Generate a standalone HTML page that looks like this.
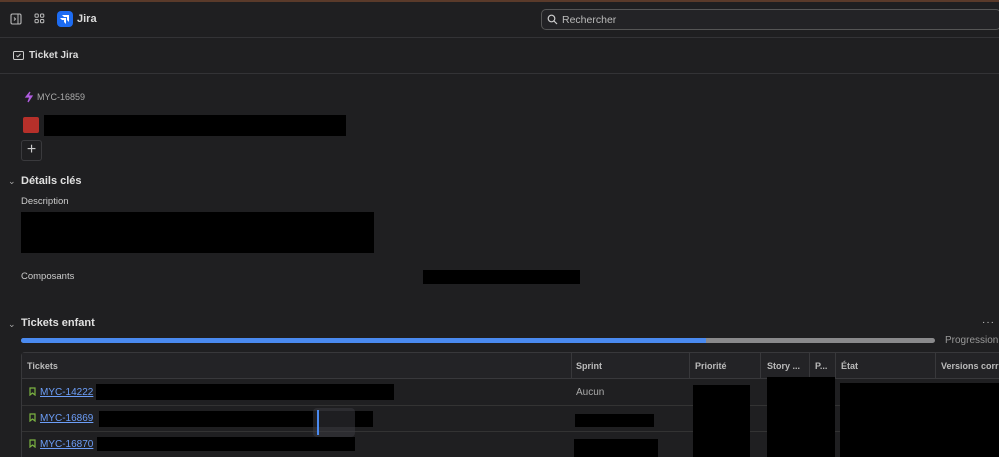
<!DOCTYPE html>
<html><head><meta charset="utf-8"><style>
*{margin:0;padding:0;box-sizing:border-box}
html,body{width:999px;height:457px;overflow:hidden}
body{background:#1f1f21;font-family:"Liberation Sans",sans-serif;color:#d6d6d6;position:relative;font-size:11px}
.a{position:absolute}
.b{position:absolute;background:#000}
.hl{position:absolute;left:0;width:999px;height:1px;background:#333336}
.link{color:#6c9ef8;text-decoration:underline;font-size:10px}
.th{position:absolute;top:361px;font-size:9px;font-weight:bold;color:#bbb}
.vl{position:absolute;top:353px;width:1px;height:104px;background:#38383b}
</style></head><body>
<div class="a" style="left:0;top:0;width:999px;height:2px;background:#5a3a2a"></div>
<svg class="a" style="left:10px;top:13px" width="12" height="12" viewBox="0 0 12 12"><rect x="1" y="1" width="10" height="10" rx="1.5" fill="none" stroke="#bbb" stroke-width="1.1"/><line x1="8" y1="1" x2="8" y2="11" stroke="#bbb"/><path d="M4 4.5l1.5 1.5L4 7.5" stroke="#bbb" fill="none"/></svg>
<svg class="a" style="left:34px;top:13px" width="11" height="11" viewBox="0 0 11 11" fill="none" stroke="#bbb"><rect x="1" y="1" width="3.3" height="3.3" rx="1"/><rect x="6.5" y="1" width="3.3" height="3.3" rx="1"/><rect x="1" y="6.5" width="3.3" height="3.3" rx="1"/><rect x="6.5" y="6.5" width="3.3" height="3.3" rx="1"/></svg>
<div class="a" style="left:57px;top:11px;width:16px;height:16px;border-radius:4px;background:#1d6cf2"><svg width="16" height="16" viewBox="0 0 16 16" fill="#fff"><path d="M5 4h7v7l-2-2V6H7z"/><path d="M3 7h6v6L7 11V9H5z"/></svg></div>
<div class="a" style="left:77px;top:13px;font-size:11px;font-weight:bold;color:#ddd">Jira</div>
<div class="a" style="left:541px;top:9px;width:460px;height:21px;border:1px solid #555;border-radius:5px;background:#232326"></div>
<svg class="a" style="left:547px;top:14px" width="11" height="11" viewBox="0 0 11 11" fill="none" stroke="#ccc" stroke-width="1.2"><circle cx="4.5" cy="4.5" r="3.3"/><path d="M7 7l3 3"/></svg>
<div class="a" style="left:562px;top:14px;font-size:10.5px;color:#bbb">Rechercher</div>
<div class="hl" style="top:37px"></div>
<svg class="a" style="left:13px;top:51px" width="11" height="9" viewBox="0 0 11 9" fill="none" stroke="#ccc"><rect x="0.5" y="0.5" width="10" height="8" rx="1.2"/><path d="M3.5 4.5l1.3 1.3L7.5 3"/></svg>
<div class="a" style="left:29px;top:50px;font-size:10px;font-weight:bold;color:#ddd">Ticket Jira</div>
<div class="hl" style="top:73px"></div>
<svg class="a" style="left:24px;top:91px" width="10" height="12" viewBox="0 0 10 12" fill="none" stroke="#b05ce0" stroke-width="1.2"><path d="M6 1L2 6h4l-2 5 4-6H4z"/></svg>
<div class="a" style="left:37px;top:92px;font-size:9px;color:#aaa">MYC-16859</div>
<div class="a" style="left:23px;top:117px;width:16px;height:16px;border-radius:2px;background:#b6302a"></div>
<div class="b" style="left:44px;top:115px;width:302px;height:21px"></div>
<div class="a" style="left:21px;top:140px;width:21px;height:21px;border:1px solid #3a3a3d;border-radius:3px;color:#ccc;font-size:16px;text-align:center;line-height:18px">+</div>
<div class="a" style="left:8px;top:176px;font-size:9px;color:#aaa">⌄</div>
<div class="a" style="left:21px;top:175px;font-size:11px;font-weight:bold;color:#e0e0e0">Détails clés</div>
<div class="a" style="left:21px;top:196px;font-size:9.5px;color:#ccc">Description</div>
<div class="b" style="left:21px;top:212px;width:353px;height:41px"></div>
<div class="a" style="left:21px;top:271px;font-size:9.5px;color:#ccc">Composants</div>
<div class="b" style="left:423px;top:270px;width:157px;height:14px"></div>
<div class="a" style="left:8px;top:319px;font-size:9px;color:#aaa">⌄</div>
<div class="a" style="left:21px;top:317px;font-size:11px;font-weight:bold;color:#e0e0e0">Tickets enfant</div>
<div class="a" style="left:982px;top:317px;font-size:10px;color:#ccc;letter-spacing:1px">···</div>
<div class="a" style="left:21px;top:338px;width:914px;height:5px;border-radius:3px;background:#8a8a8c"></div>
<div class="a" style="left:21px;top:338px;width:685px;height:5px;border-radius:3px 0 0 3px;background:#4a8af0"></div>
<div class="a" style="left:945px;top:335px;font-size:10px;color:#999">Progression</div>
<div class="a" style="left:21px;top:352px;width:990px;height:110px;border:1px solid #38383b;border-radius:4px"></div>
<div class="a" style="left:22px;top:353px;width:977px;height:25px;background:#232326"></div>
<div class="a" style="left:22px;top:378px;width:977px;height:1px;background:#38383b"></div>
<div class="a" style="left:22px;top:405px;width:977px;height:1px;background:#333"></div>
<div class="a" style="left:22px;top:431px;width:977px;height:1px;background:#333"></div>
<div class="vl" style="left:571px;height:25px"></div><div class="vl" style="left:689px;height:25px"></div><div class="vl" style="left:760px;height:25px"></div><div class="vl" style="left:809px;height:25px"></div><div class="vl" style="left:835px;height:25px"></div><div class="vl" style="left:935px;height:25px"></div>
<div class="th" style="left:27px">Tickets</div><div class="th" style="left:576px">Sprint</div><div class="th" style="left:695px">Priorité</div><div class="th" style="left:767px">Story ...</div><div class="th" style="left:815px">P...</div><div class="th" style="left:841px">État</div><div class="th" style="left:941px;white-space:nowrap">Versions corrigées</div>
<svg class="a" style="left:29px;top:387px" width="7" height="9" viewBox="0 0 7 9" fill="none" stroke="#7cb342" stroke-width="1.2"><path d="M1 1h5v7L3.5 6 1 8z"/></svg>
<svg class="a" style="left:29px;top:413px" width="7" height="9" viewBox="0 0 7 9" fill="none" stroke="#7cb342" stroke-width="1.2"><path d="M1 1h5v7L3.5 6 1 8z"/></svg>
<svg class="a" style="left:29px;top:439px" width="7" height="9" viewBox="0 0 7 9" fill="none" stroke="#7cb342" stroke-width="1.2"><path d="M1 1h5v7L3.5 6 1 8z"/></svg>
<div class="a link" style="left:40px;top:387px">MYC-14222</div>
<div class="a link" style="left:40px;top:413px">MYC-16869</div>
<div class="a link" style="left:40px;top:439px">MYC-16870</div>
<div class="b" style="left:96px;top:384px;width:298px;height:16px"></div>
<div class="b" style="left:99px;top:411px;width:274px;height:16px"></div>
<div class="b" style="left:97px;top:437px;width:258px;height:14px"></div>
<div class="a" style="left:313px;top:408px;width:42px;height:29px;background:rgba(60,60,66,0.5);border-radius:4px"></div>
<div class="a" style="left:317px;top:410px;width:2px;height:25px;background:#4a8af0"></div>
<div class="a" style="left:576px;top:387px;font-size:10px;color:#aaa">Aucun</div>
<div class="b" style="left:575px;top:414px;width:79px;height:13px"></div>
<div class="b" style="left:574px;top:439px;width:84px;height:18px"></div>
<div class="b" style="left:693px;top:385px;width:57px;height:72px"></div>
<div class="b" style="left:767px;top:377px;width:68px;height:80px"></div>
<div class="b" style="left:840px;top:383px;width:159px;height:74px"></div>
</body></html>
